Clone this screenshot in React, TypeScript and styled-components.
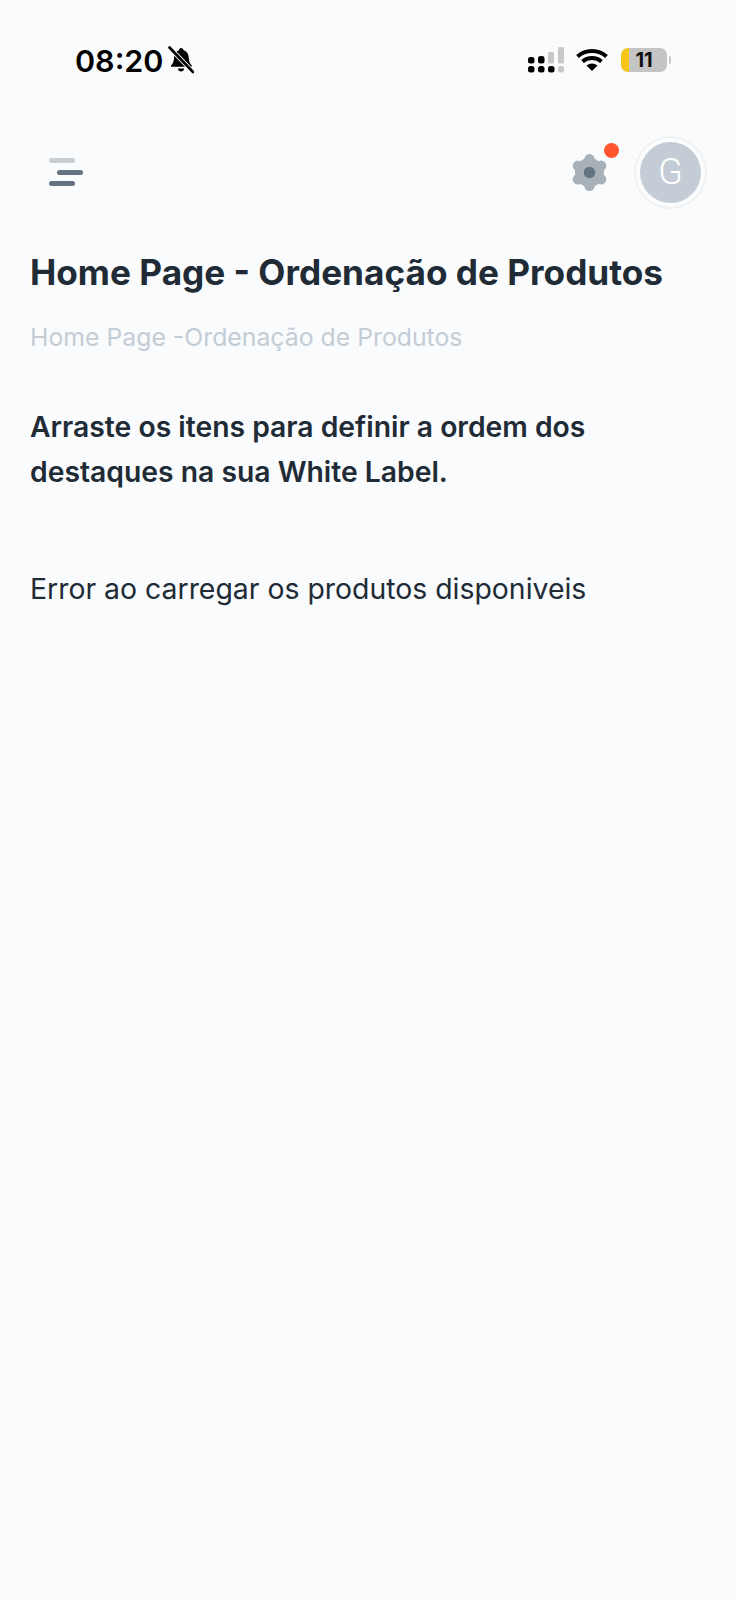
import { createGlobalStyle, styled } from "styled-components";

const GlobalStyle = createGlobalStyle`
  html, body {
    margin: 0;
    padding: 0;
    background: #f9fbfd;
  }
  * {
    box-sizing: border-box;
  }
`;

const Page = styled.div`
  width: 736px;
  height: 1600px;
  background: #f9fbfd;
  font-family: "Inter", "Liberation Sans", sans-serif;
  color: #212b36;
  overflow: hidden;
`;

const StatusBar = styled.div`
  height: 120px;
  padding: 0 69px 0 75px;
  display: flex;
  align-items: center;
  justify-content: space-between;
`;

const StatusLeft = styled.div`
  display: flex;
  align-items: center;
  gap: 4px;
`;

const Clock = styled.span`
  font-size: 30.5px;
  font-weight: 600;
  color: #000;
`;

const StatusRight = styled.div`
  display: flex;
  align-items: center;
  gap: 12px;
`;

const Battery = styled.div`
  position: relative;
  width: 46px;
  height: 24px;
  margin-left: 1px;
  border-radius: 7px;
  background: linear-gradient(to right, #f5c518 0 8px, #c4c4c4 8px);
  display: flex;
  align-items: center;
  justify-content: center;
  font-size: 20px;
  font-weight: 700;
  color: #111;
`;

const BatteryTip = styled.span`
  position: absolute;
  right: -4px;
  top: 8px;
  width: 2px;
  height: 8px;
  border-radius: 0 3px 3px 0;
  background: #c4c4c4;
`;

const TopBar = styled.div`
  height: 104px;
  padding: 0 35px 0 49px;
  display: flex;
  align-items: center;
  justify-content: space-between;
`;

const MenuButton = styled.div`
  width: 34px;
  display: flex;
  flex-direction: column;
  gap: 6.5px;
`;

const MenuLine = styled.span<{ $tone: string; $shift: number }>`
  display: block;
  width: 26px;
  height: 5px;
  border-radius: 3px;
  background: ${(p) => p.$tone};
  margin-left: ${(p) => p.$shift}px;
`;

const TopActions = styled.div`
  display: flex;
  align-items: center;
  gap: 32px;
`;

const SettingsButton = styled.div`
  position: relative;
  width: 37px;
  height: 37px;
`;

const Dot = styled.span`
  position: absolute;
  top: -11px;
  right: -11px;
  width: 15px;
  height: 15px;
  border-radius: 50%;
  background: #ff5630;
`;

const Avatar = styled.div`
  width: 61px;
  height: 61px;
  border-radius: 50%;
  background: #c4cdd5;
  box-shadow: 0 0 0 4px #fbfcfd, 0 0 0 6px #eff1f3;
  color: #fff;
  font-family: "Roboto", sans-serif;
  font-size: 36px;
  font-weight: 300;
  display: flex;
  align-items: center;
  justify-content: center;
`;

const Content = styled.div`
  padding: 24px 30px 0;
`;

const Title = styled.h1`
  margin: 0;
  font-size: 35.2px;
  line-height: 48px;
  font-weight: 700;
  white-space: nowrap;
`;

const Breadcrumb = styled.p`
  margin: 24px 0 0;
  font-size: 24.8px;
  line-height: 34px;
  font-weight: 400;
  color: #c4cdd5;
  white-space: nowrap;
`;

const Lead = styled.p`
  margin: 51px 0 0;
  font-size: 28.3px;
  line-height: 45px;
  font-weight: 600;
`;

const ErrorText = styled.p`
  margin: 71px 0 0;
  font-size: 28.4px;
  line-height: 45px;
  font-weight: 400;
  white-space: nowrap;
`;

export default function App() {
  return (
    <Page>
      <GlobalStyle />
      <StatusBar>
        <StatusLeft>
          <Clock>08:20</Clock>
          <svg width="26" height="28" viewBox="0 0 26 28">
            <path
              d="M13 2c1.500 0 2.400 1 2.600 2.200C19 5.300 20.600 8 20.800 12c.2 3.600 1 5.400 3 7.400v1.400H3v-1.400c2-2 2.800-3.800 3-7.400.2-4 1.800-6.700 5.200-7.800C11.400 3 11.500 2 13 2zM9.800 22.500h6.400c-.3 1.900-1.500 3-3.200 3s-2.900-1.100-3.200-3z"
              fill="#000"
            />
            <path d="M1 1l24 25" stroke="#f9fbfd" strokeWidth="4.500" />
            <path d="M1.500 1.500l23.500 24.500" stroke="#000" strokeWidth="2.600" strokeLinecap="round" />
          </svg>
        </StatusLeft>
        <StatusRight>
          <svg width="36" height="26" viewBox="0 0 36 26">
            <rect x="0" y="10" width="6.500" height="6.500" rx="2.500" fill="#000" />
            <rect x="0" y="19" width="6.500" height="6.500" rx="2.500" fill="#000" />
            <rect x="10" y="9" width="6.500" height="7.500" rx="2.500" fill="#000" />
            <rect x="10" y="19" width="6.500" height="6.500" rx="2.500" fill="#000" />
            <rect x="20" y="5" width="6" height="11.500" rx="1.500" fill="#c8c8c8" />
            <rect x="20" y="19" width="6.500" height="6.500" rx="2.500" fill="#000" />
            <rect x="30" y="0" width="6" height="16.500" rx="1.500" fill="#c8c8c8" />
            <rect x="30" y="19" width="6" height="6.500" rx="2" fill="#c8c8c8" />
          </svg>
          <svg width="32" height="24" viewBox="0 0 32 24">
            <path
              d="M1.500 8.500C9.500 1 22.500 1 30.500 8.500M6.500 13.500C11.800 8.800 20.200 8.800 25.500 13.500"
              fill="none"
              stroke="#000"
              strokeWidth="4"
            />
            <path d="M10.500 17.500C14 14.800 18 14.800 21.500 17.500L16 23z" fill="#000" />
          </svg>
          <Battery>
            11
            <BatteryTip />
          </Battery>
        </StatusRight>
      </StatusBar>
      <TopBar>
        <MenuButton>
          <MenuLine $tone="#c9ced3" $shift={0} />
          <MenuLine $tone="#637381" $shift={8} />
          <MenuLine $tone="#637381" $shift={0} />
        </MenuButton>
        <TopActions>
          <SettingsButton>
            <svg width="37" height="37" viewBox="0 0 37 37">
              <g fill="#a9b1b8">
                <circle cx="18.500" cy="18.500" r="14.500" />
                <circle cx="18.500" cy="5.200" r="5.200" />
                <circle cx="18.500" cy="31.800" r="5.200" />
                <circle cx="6.900" cy="11.800" r="5.200" />
                <circle cx="30.100" cy="11.800" r="5.200" />
                <circle cx="6.900" cy="25.200" r="5.200" />
                <circle cx="30.100" cy="25.200" r="5.200" />
              </g>
              <circle cx="18.500" cy="18.500" r="5.800" fill="#637381" />
            </svg>
            <Dot />
          </SettingsButton>
          <Avatar>G</Avatar>
        </TopActions>
      </TopBar>
      <Content>
        <Title>Home Page - Ordenação de Produtos</Title>
        <Breadcrumb>Home Page -Ordenação de Produtos</Breadcrumb>
        <Lead>
          Arraste os itens para definir a ordem dos
          <br />
          destaques na sua White Label.
        </Lead>
        <ErrorText>Error ao carregar os produtos disponiveis</ErrorText>
      </Content>
    </Page>
  );
}
